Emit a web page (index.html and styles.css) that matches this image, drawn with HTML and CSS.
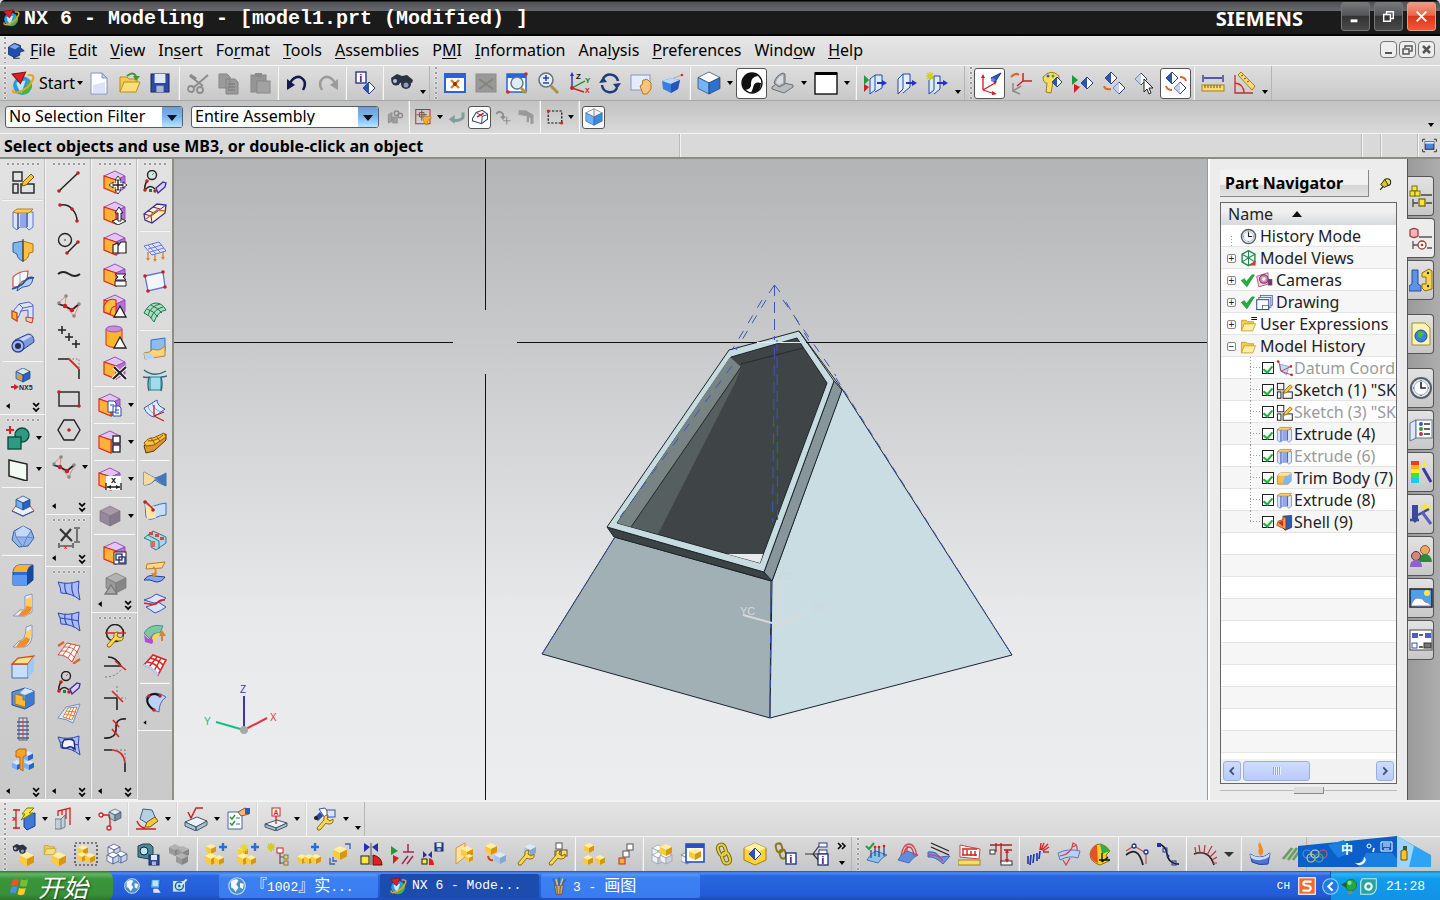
FILE: index.html
```html
<!DOCTYPE html>
<html lang="en">
<head>
    <meta charset="UTF-8">
    <meta name="viewport" content="width=device-width, initial-scale=1.0">
    <title>NX 6 - Modeling</title>
    <link rel="stylesheet" href="styles.css">
</head>
<body>
    <header class="titlebar">
        <span class="ico" data-icon="nx"></span>
        <h1>NX 6 - Modeling - [model1.prt (Modified) ]</h1>
        <span class="brand">SIEMENS</span>
        <div class="window-buttons">
            <button type="button" aria-label="Minimize"><svg viewBox="0 0 28 28"><path d="M9 17h7v3H9z" fill="#fff"/></svg></button>
            <button type="button" aria-label="Restore"><svg viewBox="0 0 28 28"><path d="M9 12h7v7H9zM12 12V9h7v7h-3" fill="none" stroke="#fff" stroke-width="1.5"/></svg></button>
            <button type="button" class="close" aria-label="Close"><svg viewBox="0 0 28 28"><path d="M9 9l10 10M19 9L9 19" stroke="#fff" stroke-width="2"/></svg></button>
        </div>
    </header>

    <nav class="menubar">
        <span class="grip"></span>
        <span class="ico" data-icon="part"></span>
        <button type="button"><u>F</u>ile</button>
        <button type="button"><u>E</u>dit</button>
        <button type="button"><u>V</u>iew</button>
        <button type="button">In<u>s</u>ert</button>
        <button type="button">Fo<u>r</u>mat</button>
        <button type="button"><u>T</u>ools</button>
        <button type="button"><u>A</u>ssemblies</button>
        <button type="button">P<u>M</u>I</button>
        <button type="button"><u>I</u>nformation</button>
        <button type="button">Ana<u>l</u>ysis</button>
        <button type="button"><u>P</u>references</button>
        <button type="button">Wind<u>o</u>w</button>
        <button type="button"><u>H</u>elp</button>
        <div class="doc-buttons">
            <button type="button" aria-label="Minimize document"><svg viewBox="0 0 15 15"><path d="M4 11h7" stroke="#555" stroke-width="2"/></svg></button>
            <button type="button" aria-label="Restore document"><svg viewBox="0 0 15 15"><path d="M3 7h6v5H3zM5 6V4h7v5h-2" fill="none" stroke="#555" stroke-width="1.5"/></svg></button>
            <button type="button" aria-label="Close document"><svg viewBox="0 0 15 15"><path d="M4 4l7 7M11 4l-7 7" stroke="#555" stroke-width="2.5"/></svg></button>
        </div>
    </nav>

    <div class="dockrow main-row">
        <div class="toolbar">
            <span class="grip"></span>
            <button type="button" class="start-app"><span class="ico" data-icon="nx"></span>Start<i class="caret"></i></button>
            <div class="tools" data-tools="new open save | cut copy paste | undo redo | info | find >."></div>
        </div>
        <div class="toolbar">
            <span class="grip"></span>
            <div class="tools" data-tools="fit fit-off zoom-window zoom orient rotate pan perspective | shaded > *render edges > background > | section clip clip-new >."></div>
        </div>
        <div class="toolbar">
            <span class="grip"></span>
            <div class="tools" data-tools="*wcs wcs-display palette show-hide hide show *invert | measure angle >."></div>
        </div>
    </div>

    <div class="dockrow selection-row">
        <div class="combo"><select class="filter" aria-label="Type filter"><option>No Selection Filter</option></select></div>
        <div class="combo"><select class="scope" aria-label="Selection scope"><option>Entire Assembly</option></select></div>
        <div class="tools small" data-tools="related | snap > back *body turn detail | marquee > | *solid"></div>
        <i class="caret corner"></i>
    </div>

    <div class="status-row">
        <p>Select objects and use MB3, or double-click an object</p>
        <span class="cell wide"></span>
        <span class="cell"></span>
        <span class="cell mid"></span>
        <span class="cell last ico" data-icon="fullscreen"></span>
    </div>

    <main class="workspace">
        <aside class="left-dock">
            <div class="column" data-tools="# sketch - extrude revolve sweep guide tube - nx5 endm # unite+ datum+ - boss sphere - blend bend bend-soft chamfer shell thread pattern end!"></div>
            <div class="column" data-tools="# line arc circle-line spline points-curve points chamfer-curve rectangle hexagon - points-curve+ endl # dimension end # surf-ruled surf-mesh surf-move curves surf-orange surf-hole end!"></div>
            <div class="column" data-tools="# sync-move sync-pull sync-offset sync-replace sync-resize sync-cylinder sync-delete - sync-copy+ - sync-pattern+ - sync-dim+ - sync-off+ - sync-group sync-shape end # curve-edit curve-trim curve-corner curve-s curve-fillet end!"></div>
            <div class="column narrow" data-tools="# curves wire-box - mesh-drop quad mesh-green - face-join face-bridge face-axis face-wave - face-twist face-curve face-points face-project face-fold face-color face-red - face-edge endx"></div>
        </aside>

        <section class="viewport" aria-label="Graphics window">
            <svg viewBox="174 159 1034 641" preserveAspectRatio="xMidYMid slice">
                <!-- body -->
                <g stroke="#1c2430" stroke-width="1" stroke-linejoin="round">
                    <path d="M542 654L770 718L771 581L615 537Z" fill="#a0b0b5"/>
                    <path d="M770 718L1012 655L842 389L772 581Z" fill="#c9dde2"/>
                    <path d="M607 527L764 572L772 581L614 537Z" fill="#3c4343"/>
                    <path d="M834 381L842 390L772 581L764 572Z" fill="#87969a"/>
                    <path d="M729 350L799 331L834 381L764 572L607 527Z" fill="#c7dcdf"/>
                    <path d="M731 357L797 338L827 383L760 563L617 523Z" fill="#3f4546"/>
                </g>
                <path d="M727 554H763L760 563Z" fill="#e9ebeb"/>
                <path d="M741 367L735 383L658 534L631 527Z" fill="#565f5f"/>
                <path d="M730 357L741 367L631 527L617 523Z" fill="#788483"/>
                <path d="M741 367L631 527M741 364L803 348M799 331L842 389" fill="none" stroke="#252b2d"/>
                <!-- hidden edges -->
                <g fill="none" stroke="#3957bd" stroke-width="1">
                    <path d="M774.500 285V340M774.500 348L772.500 522M777 340L777.500 520" stroke-dasharray="11 6"/>
                    <path d="M766 300L736 350M762 300L732 350M732 366L620 517M783 300L836 376M786 302L812 346" stroke-dasharray="9 9"/>
                    <path d="M836 378L1012 655M770 718L771 581M542 654L615 537" stroke-dasharray="8 7"/>
                    <path d="M769 293L774.500 285L780 292"/>
                </g>
                <!-- crosshair -->
                <path d="M174 342.500H453M517 342.500H757M806 342.500H1208M485.500 159V310M485.500 374V800" stroke="#111" fill="none"/>
                <path d="M757 342.500H801" stroke="#e8eeee"/>
                <!-- work coordinate system -->
                <path d="M779 583V625L743 615M779 625L808 611" stroke="#d9d9dc" stroke-width="2" fill="none"/>
                <g class="wcs-label"><text x="778" y="580">ZC</text><text x="740" y="615">YC</text><text x="813" y="611">XC</text></g>
                <!-- view triad -->
                <g stroke-width="2" fill="none">
                    <path d="M244 730V696" stroke="#3b35b5"/>
                    <path d="M244 730L216 722" stroke="#16bd84"/>
                    <path d="M244 730L267 718" stroke="#e0343f"/>
                </g>
                <circle cx="244" cy="730" r="4" fill="#a8a8a8"/>
                <g class="triad-label"><text x="240" y="693" fill="#3b35b5">Z</text><text x="204" y="725" fill="#16bd84">Y</text><text x="270" y="721" fill="#e0343f">X</text></g>
            </svg>
        </section>

        <aside class="navigator">
            <div class="nav-head">
                <h2>Part Navigator</h2>
                <span class="ico pin" data-icon="pin"></span>
            </div>
            <div class="tree-box">
                <button type="button" class="tree-title">Name<i class="sort"></i></button>
                <ul class="tree">
                    <li><span class="node"></span><span class="ico" data-icon="clock"></span>History Mode</li>
                    <li><span class="node box">+</span><span class="ico" data-icon="views"></span>Model Views</li>
                    <li><span class="node box">+</span><span class="ico" data-icon="check"></span><span class="ico" data-icon="camera"></span>Cameras</li>
                    <li><span class="node box">+</span><span class="ico" data-icon="check"></span><span class="ico" data-icon="drawing"></span>Drawing</li>
                    <li><span class="node box">+</span><span class="ico" data-icon="folder-eq"></span>User Expressions</li>
                    <li><span class="node box">−</span><span class="ico" data-icon="folder"></span>Model History</li>
                    <li class="child off"><label><input type="checkbox" checked><span class="ico" data-icon="csys"></span>Datum Coord</label></li>
                    <li class="child"><label><input type="checkbox" checked><span class="ico" data-icon="sketch"></span>Sketch (1) "SK</label></li>
                    <li class="child off"><label><input type="checkbox" checked><span class="ico" data-icon="sketch"></span>Sketch (3) "SK</label></li>
                    <li class="child"><label><input type="checkbox" checked><span class="ico" data-icon="extrude"></span>Extrude (4)</label></li>
                    <li class="child off"><label><input type="checkbox" checked><span class="ico" data-icon="extrude"></span>Extrude (6)</label></li>
                    <li class="child"><label><input type="checkbox" checked><span class="ico" data-icon="trim-body"></span>Trim Body (7)</label></li>
                    <li class="child"><label><input type="checkbox" checked><span class="ico" data-icon="extrude"></span>Extrude (8)</label></li>
                    <li class="child end"><label><input type="checkbox" checked><span class="ico" data-icon="shell-red"></span>Shell (9)</label></li>
                </ul>
                <div class="scroll">
                    <button type="button" aria-label="Scroll left"><svg viewBox="0 0 18 18"><path d="M11 5L7 9l4 4" fill="none" stroke="#3c5080" stroke-width="2"/></svg></button>
                    <span class="thumb"><i></i></span>
                    <button type="button" class="right" aria-label="Scroll right"><svg viewBox="0 0 18 18"><path d="M7 5l4 4-4 4" fill="none" stroke="#3c5080" stroke-width="2"/></svg></button>
                </div>
            </div>
            <div class="splitter"><i></i></div>
        </aside>

        <nav class="resource-bar">
            <button type="button" aria-label="Assembly Navigator" data-icon="tab-assembly"></button>
            <button type="button" class="active" aria-label="Part Navigator" data-icon="tab-part"></button>
            <button type="button" aria-label="Reuse Library" data-icon="tab-reuse"></button>
            <button type="button" class="apart" aria-label="Web Browser" data-icon="tab-web"></button>
            <button type="button" class="apart" aria-label="History" data-icon="clock"></button>
            <button type="button" aria-label="Process Studio" data-icon="tab-list"></button>
            <button type="button" aria-label="Materials" data-icon="tab-colors"></button>
            <button type="button" aria-label="Manufacturing" data-icon="tab-wizard"></button>
            <button type="button" aria-label="Roles" data-icon="tab-roles"></button>
            <button type="button" aria-label="Scenes" data-icon="tab-scene"></button>
            <button type="button" aria-label="Windows" data-icon="tab-windows"></button>
        </nav>
    </main>

    <div class="dockrow lower-row">
        <div class="toolbar">
            <span class="grip"></span>
            <div class="tools" data-tools="dim-quick > dim-ord > csys-link | edit-face > | finish > checklist | label-a > | pmi-tools > >."></div>
        </div>
    </div>

    <div class="dockrow assembly-row">
        <div class="toolbar">
            <span class="grip"></span>
            <div class="tools" data-tools="as-find as-open as-box as-wire as-camera as-off | as-add as-new as-parent as-array as-move mirror constrain mirror-save as-wave as-replace as-wrench as-wrench2 | as-explode as-steps | as-ghost as-window link link-cube link-info tree-info more"></div>
        </div>
        <div class="toolbar">
            <span class="grip"></span>
            <div class="tools" data-tools="an-check an-arc an-lines an-gap an-dist | an-comb an-comb2 an-color | an-curve an-nodes | an-hair >> | an-flow an-zebra"></div>
        </div>
        <div class="ime">
            <svg viewBox="0 0 136 32">
                <path d="M0 11L99 1V32H0Z" fill="#0b5fc8"/>
                <path d="M30 10l16-5 8 12-14 6zM60 32l8-14h26l5 6v8z" fill="#1b7fe0"/>
                <path d="M99 1L133 20V32H99Z" fill="#2fa3f5"/>
                <path d="M99 1l17 10-5 21H99z" fill="#9cd4fb"/>
                <g fill="none" stroke-width="1.200"><circle cx="9" cy="19" r="4" stroke="#3b8df0"/><circle cx="17" cy="19" r="4" stroke="#c9d6e6"/><circle cx="25" cy="19" r="4" stroke="#e05050"/><circle cx="13" cy="23" r="4" stroke="#e8c840"/><circle cx="21" cy="23" r="4" stroke="#45b860"/></g>
                <path d="M66 22q0 7-9 6 6 5 10-1 2-3-1-5" fill="#fff"/>
                <circle cx="71" cy="11" r="2" fill="none" stroke="#fff"/><path d="M76 13l-1 4" stroke="#fff" stroke-width="1.500"/>
                <path d="M83 7h11v9H83zM85 9h7M85 11h7M86 14h5" fill="none" stroke="#fff"/>
                <path d="M103 16q3-3 6 0v9h-6z" fill="#f7c42a" stroke="#6b5410"/><path d="M105 11h4v4h-4z" fill="#4a5630"/>
            </svg>
            <span>中</span>
        </div>
    </div>

    <footer class="taskbar">
        <button type="button" class="start"><span class="ico" data-icon="windows"></span>开始</button>
        <div class="quick">
            <button type="button" aria-label="Browser" data-icon="globe"></button>
            <button type="button" aria-label="Desktop" data-icon="desktop"></button>
            <button type="button" aria-label="Mail" data-icon="mail"></button>
        </div>
        <button type="button" class="task"><span class="ico" data-icon="globe"></span><span><b>『</b>1002<b>』实</b>...</span></button>
        <button type="button" class="task active"><span class="ico" data-icon="nx"></span><span>NX 6 - Mode...</span></button>
        <button type="button" class="task"><span class="ico" data-icon="brushes"></span><span>3 - <b>画图</b></span></button>
        <div class="lang"><span>CH</span><span class="ico" data-icon="sogou"></span></div>
        <div class="tray">
            <span class="ico" data-icon="tray-back"></span>
            <span class="ico" data-icon="tray-green"></span>
            <span class="ico" data-icon="tray-teal"></span>
            <time>21:28</time>
        </div>
    </footer>

    <script src="toolbars.js"></script>
</body>
</html>
```

FILE: styles.css
```css
* {
    box-sizing: border-box;
}

body {
    margin: 0;
    min-height: 100vh;
    display: flex;
    flex-direction: column;
    overflow: hidden;
    font-family: "Noto Sans", "Noto Sans CJK SC", sans-serif;
    font-size: 16px;
    color: #000;
    background: #d8d8d8;
}

button {
    font: inherit;
    color: inherit;
    background: none;
    border: 0;
    padding: 0;
    margin: 0;
}

svg {
    display: block;
}

ul, p, h1, h2 {
    margin: 0;
    padding: 0;
}

.ico {
    display: inline-block;
    flex: none;
    width: 18px;
    height: 18px;
}

.ico svg {
    width: 100%;
    height: 100%;
}

/* title */
.titlebar {
    display: flex;
    align-items: center;
    height: 36px;
    padding: 0 4px 0 2px;
    color: #fff;
    background: linear-gradient(#000 1px, #505154 2px, #68696c 11px, #1b1b1b 11px, #1b1b1b 34px, #000 34px);
    border-radius: 5px 5px 0 0;
}

.titlebar h1 {
    flex: 1;
    margin-left: 4px;
    font: bold 20px "Liberation Mono", monospace;
    white-space: pre;
}

.brand {
    margin-right: 38px;
    font: bold 20px "Noto Sans", sans-serif;
}

.window-buttons {
    display: flex;
    gap: 4px;
    align-self: flex-start;
    padding-top: 2px;
}

.window-buttons button {
    width: 29px;
    height: 29px;
    border: 1px solid #777;
    border-radius: 3px;
    background: linear-gradient(#77787a, #55565a 45%, #333 50%, #4a4a4a);
}

.window-buttons .close {
    border-color: #d8a090;
    background: linear-gradient(#f09a80, #e8684c 45%, #e03418 50%, #ee5a38);
}

/* menu */
.menubar {
    display: flex;
    align-items: center;
    gap: 13px;
    height: 30px;
    padding: 0 5px 2px 0;
    background: linear-gradient(#e6e6e6, #dadada);
    border-bottom: 1px solid #f6f6f6;
}

.menubar .ico {
    margin: 0 -8px 0 -14px;
}

.menubar u {
    text-underline-offset: 2px;
}

.doc-buttons {
    display: flex;
    gap: 2px;
    margin-left: auto;
}

.doc-buttons button {
    width: 17px;
    height: 17px;
    border: 1px solid #777;
    border-radius: 4px;
    background: #eee;
}

/* toolbars */
.dockrow {
    display: flex;
    position: relative;
    background: linear-gradient(#dedede, #c8c8c8);
}

.toolbar {
    display: flex;
    align-items: stretch;
    margin-right: 1px;
    border-right: 1px solid #b5b5b5;
}

.grip {
    flex: none;
    width: 8px;
    background: radial-gradient(circle at 2px 2px, #999 1px, #f4f4f4 1px, transparent 2px) 3px 5px / 4px 5px repeat-y;
}

.menubar .grip {
    align-self: stretch;
}

.tools {
    display: flex;
    align-items: center;
}

.tool {
    flex: none;
    display: flex;
    align-items: center;
    justify-content: center;
    width: 31px;
    height: 31px;
}

.tool svg {
    width: 24px;
    height: 24px;
}

.tool.pressed {
    border: 1px solid #555;
    border-radius: 3px;
    background: #fff;
}

.sep {
    flex: none;
    align-self: stretch;
    width: 6px;
    background: linear-gradient(90deg, transparent 2px, #b8b8b8 2px, #f6f6f6 3px, #f6f6f6 4px, transparent 4px);
}

.caret {
    display: inline-block;
    border: 3px solid transparent;
    border-top: 4px solid #000;
    border-bottom: 0;
}

.drop {
    flex: none;
    display: flex;
    align-items: center;
    justify-content: center;
    width: 12px;
    height: 31px;
}

.drop.low {
    align-items: flex-end;
    padding-bottom: 5px;
}

.drop.big {
    width: 18px;
}

.drop.big .caret {
    border-width: 5px 5px 0;
    border-top-color: #333;
}

.more, .more svg {
    width: 19px;
    height: 31px;
}

.main-row {
    height: 35px;
    border-bottom: 1px solid #a8a8a8;
}

.start-app {
    display: flex;
    align-items: center;
    width: 75px;
    padding-left: 2px;
}

.start-app .ico {
    width: 25px;
    height: 25px;
    margin-right: 4px;
}

.start-app .caret {
    margin-left: 2px;
}

.selection-row {
    align-items: center;
    gap: 8px;
    height: 32px;
    padding-left: 5px;
    background: linear-gradient(#c2c2c2, #d9d9d9);
}

.combo {
    position: relative;
}

.combo select {
    display: block;
    height: 22px;
    padding: 0 24px 2px 3px;
    font: 16px "Noto Sans", sans-serif;
    line-height: 18px;
    color: #000;
    appearance: none;
    background: #fff;
    border: 1px solid #555e6a;
    border-radius: 3px;
}

.combo .filter {
    width: 178px;
}

.combo .scope {
    width: 188px;
}

.combo::before {
    content: "";
    position: absolute;
    top: 1px;
    right: 1px;
    width: 20px;
    height: 20px;
    border-radius: 0 2px 2px 0;
    background: linear-gradient(#6f9bd6, #7ab6ef 50%, #b9e4ff);
    pointer-events: none;
}

.combo::after {
    content: "";
    position: absolute;
    top: 9px;
    right: 6px;
    border: 5px solid transparent;
    border-top: 6px solid #111;
    border-bottom: 0;
    pointer-events: none;
}

.small {
    margin-left: -4px;
    align-self: stretch;
}

.small .tool {
    width: 23px;
    height: 23px;
}

.small .tool svg {
    width: 18px;
    height: 18px;
}

.small .drop {
    width: 10px;
}

.corner {
    margin: 16px 6px 0 auto;
}

/* prompt line */
.status-row {
    display: flex;
    align-items: center;
    height: 26px;
    background: #d9d9d9;
    border-top: 1px solid #f4f4f4;
    border-bottom: 2px solid #8c8c86;
}

.status-row p {
    width: 680px;
    padding-left: 4px;
    font-weight: bold;
    white-space: nowrap;
}

.cell {
    align-self: stretch;
    width: 19px;
    border-left: 1px solid #f4f4f4;
    box-shadow: -1px 0 #bbb;
}

.cell.wide {
    flex: 1;
}

.cell.mid {
    width: 37px;
}

.cell.last {
    width: 22px;
    height: auto;
    padding: 4px 3px;
}

/* workspace */
.workspace {
    flex: 1;
    display: flex;
    min-height: 0;
}

.left-dock {
    display: flex;
    border-right: 2px solid #8e8e84;
    background: linear-gradient(#e2e2e2, #c9c9c9);
}

.column {
    display: flex;
    flex-direction: column;
    align-items: center;
    width: 46px;
    border-right: 1px solid #f6f6f6;
    box-shadow: inset -1px 0 #bdbdbd;
}

.column.narrow {
    width: 34px;
    border: 0;
    box-shadow: none;
}

.column .grip {
    width: 36px;
    height: 7px;
    background: radial-gradient(circle at 2px 2px, #999 1px, #f4f4f4 1px, transparent 2px) 1px 3px / 5px 4px repeat-x;
}

.narrow .grip {
    width: 26px;
}

.column .sep {
    width: auto;
    height: 6px;
    margin: 0 2px;
    background: linear-gradient(transparent 2px, #b8b8b8 2px, #f6f6f6 3px, #f6f6f6 4px, transparent 4px);
}

.pair {
    display: flex;
    align-self: stretch;
    padding-left: 2px;
}

.colend {
    flex: none;
    display: flex;
    align-self: stretch;
    align-items: flex-end;
    height: 14px;
    padding: 0 4px;
    border-bottom: 1px solid #f6f6f6;
}

.colend.m {
    height: 20px;
}

.colend.l {
    height: 33px;
}

.colend.last {
    margin-top: auto;
}

.colend svg {
    width: 36px;
    height: 12px;
}

.viewport {
    flex: 1;
    min-width: 0;
    background: linear-gradient(#b3b4b5, #d5d6d7 45%, #e8e9ea 72%, #ecedee);
}

.viewport svg {
    width: 100%;
    height: 100%;
}

.wcs-label {
    font: 11px "Liberation Sans", sans-serif;
    fill: #d4d6d9;
}

.triad-label {
    font: 10px "Liberation Sans", sans-serif;
}

/* part navigator */
.navigator {
    display: flex;
    flex-direction: column;
    width: 199px;
    padding: 11px 10px 0 10px;
    background: #ececec;
    border-left: 2px solid #fff;
    box-shadow: -1px 0 #999;
}

.nav-head {
    display: flex;
    align-items: center;
    gap: 10px;
    margin-bottom: 5px;
}

.nav-head h2 {
    width: 149px;
    height: 27px;
    padding-left: 5px;
    font-size: 16px;
    line-height: 26px;
    white-space: nowrap;
    background: linear-gradient(#f2f2f2 55%, #d4d4d4 60%, #e4e4e4);
    border: solid #888;
    border-width: 0 1px 1px 0;
}

.pin {
    width: 14px;
    height: 14px;
}

.tree-box {
    flex: 1;
    display: flex;
    flex-direction: column;
    border: 1px solid #666;
    background: #fff;
    color: #222;
}

.tree-title {
    display: flex;
    align-items: center;
    gap: 19px;
    height: 22px;
    padding-left: 7px;
    background: linear-gradient(#f0f0f0 40%, #d6d8da);
}

.sort {
    border: 5px solid transparent;
    border-bottom: 6px solid #111;
    border-top: 0;
}

.tree {
    flex: 1;
    list-style: none;
    background: repeating-linear-gradient(#fff 0 21px, #e4e4e4 21px 22px, #f6f6f6 22px 43px, #e4e4e4 43px 44px);
}

.tree li {
    display: flex;
    align-items: center;
    height: 22px;
    padding-left: 6px;
    white-space: nowrap;
}

.tree .ico {
    width: 17px;
    height: 17px;
    margin-right: 3px;
}

.tree .ico:has(+ .ico) {
    width: 15px;
    margin-right: 1px;
}

.tree label .ico {
    margin-right: 1px;
}

.node {
    flex: none;
    width: 9px;
    height: 22px;
    margin-right: 4px;
    background: repeating-linear-gradient(#999 0 1px, transparent 1px 3px) 4px 11px / 1px 11px no-repeat;
}

.node.box {
    height: 9px;
    background: #fff;
    border: 1px solid #888;
    border-radius: 2px;
    font: 10px "Liberation Sans", sans-serif;
    line-height: 7px;
    text-align: center;
}

.tree .child {
    padding-left: 29px;
    background: repeating-linear-gradient(#999 0 1px, transparent 1px 3px) 29px 0 / 1px 100% no-repeat, repeating-linear-gradient(90deg, #999 0 1px, transparent 1px 3px) 29px 10px / 10px 1px no-repeat;
}

.tree .child.end {
    background-size: 1px 11px, 10px 1px;
}

.tree label {
    display: flex;
    align-items: center;
    padding-left: 12px;
}

.tree .off {
    color: #9a9a9a;
}

.tree input {
    appearance: none;
    width: 12px;
    height: 12px;
    margin: 0 2px 0 0;
    border: 1px solid #222;
    background: #fff;
    display: grid;
    place-items: center;
}

.tree input:checked::before {
    content: "";
    width: 4px;
    height: 7px;
    border: solid #1fae3c;
    border-width: 0 2px 2px 0;
    transform: rotate(40deg);
}

.scroll {
    display: flex;
    gap: 2px;
    height: 24px;
    padding: 2px;
    background: #f2f2f2;
}

.scroll button, .thumb {
    width: 18px;
    height: 20px;
    border: 1px solid #98b0e0;
    border-radius: 3px;
    background: linear-gradient(#d0dcfb, #b8cbf8);
}

.scroll .thumb {
    display: grid;
    place-items: center;
    width: 67px;
}

.thumb i {
    width: 8px;
    height: 8px;
    background: repeating-linear-gradient(90deg, #8fa8e0 0 1px, #e8efff 1px 2px);
}

.scroll .right {
    margin-left: auto;
}

.splitter {
    display: grid;
    place-items: center;
    height: 16px;
    background: linear-gradient(#bbb, #bbb) 0 6px / 100% 1px no-repeat;
}

.splitter i {
    width: 30px;
    height: 7px;
    margin-bottom: 3px;
    background: #ddd;
    border: solid #888;
    border-width: 0 1px 1px 0;
}

.resource-bar {
    display: flex;
    flex-direction: column;
    gap: 2px;
    width: 33px;
    padding-top: 17px;
    background: linear-gradient(90deg, #9a9a9a, #adadad);
    border-left: 1px solid #555;
}

.resource-bar button {
    flex: none;
    width: 26px;
    height: 40px;
    border: 1px solid #555;
    border-left: 0;
    border-radius: 0 4px 4px 0;
    background: linear-gradient(#e2e2e2, #c8c8c8);
}

.resource-bar .active {
    width: 28px;
    background: #ececec;
    margin-left: -1px;
}

.resource-bar .apart {
    margin-top: 12px;
}

.resource-bar svg {
    width: 24px;
    height: 24px;
    margin: auto;
}

/* lower toolbars */
.lower-row {
    height: 36px;
    background: linear-gradient(#e4e4e4, #d8d8d8);
    border-top: 2px solid #f2f2f2;
}

.assembly-row {
    height: 35px;
    background: linear-gradient(#dadada, #c6c6c6);
    border-top: 1px solid #f6f6f6;
}

.ime {
    position: absolute;
    right: 6px;
    bottom: 4px;
    width: 136px;
    height: 32px;
}

.ime svg {
    width: 136px;
    height: 32px;
}

.ime span {
    position: absolute;
    left: 43px;
    top: 5px;
    color: #fff;
    font: bold 12px "Noto Sans CJK SC", sans-serif;
}

/* taskbar */
.taskbar {
    display: flex;
    align-items: center;
    height: 30px;
    color: #fff;
    font: 13px "Liberation Mono", "Noto Sans CJK SC", monospace;
    background: linear-gradient(#1d4fc0, #4a8df8 2px, #2a66e0 5px, #235bd8 24px, #1c48b0);
}

.taskbar b {
    font: 16px "Noto Sans CJK SC", sans-serif;
    line-height: 1;
}

.start {
    display: flex;
    align-items: center;
    gap: 8px;
    width: 113px;
    height: 30px;
    padding-left: 10px;
    font: italic 25px "Noto Sans CJK SC", sans-serif;
    line-height: 30px;
    text-shadow: 1px 1px 2px #1c4a1c;
    border-radius: 0 8px 8px 0;
    background: linear-gradient(#2d7a2d, #64b564 3px, #3a963a 8px, #388f38 24px, #2a6e2a);
}

.start .ico {
    width: 20px;
    height: 20px;
}

.quick {
    display: flex;
    gap: 8px;
    width: 106px;
    padding-left: 11px;
}

.quick svg {
    width: 16px;
    height: 16px;
}

.task {
    display: flex;
    align-items: center;
    gap: 5px;
    width: 159px;
    height: 24px;
    margin-right: 2px;
    padding-left: 9px;
    line-height: 16px;
    white-space: pre;
    border-radius: 2px;
    background: linear-gradient(#5a9af8, #3b80f2 4px, #3a7cf0);
}

.task.active {
    background: #1c4cae;
}

.lang {
    display: flex;
    align-items: center;
    gap: 8px;
    margin-left: auto;
    margin-right: 14px;
    font-size: 11px;
}

.tray {
    display: flex;
    align-items: center;
    gap: 2px;
    height: 30px;
    padding-right: 15px;
    background: linear-gradient(#1280d0, #2cb4f8 3px, #129bec 8px, #1292e4);
    border-left: 1px solid #0d5fae;
}

.tray .ico {
    width: 17px;
    height: 17px;
}

.tray .ico:first-child {
    margin-left: -9px;
}

.tray time {
    margin-left: 7px;
}
```

FILE: toolbars.js
```js
// small drawing helpers, every icon sits on a 24x24 grid
const p = (d, f = 'none', s = 'none', w = 1) => `<path d="${d}" fill="${f}" stroke="${s}" stroke-width="${w}"/>`;
const l = (d, s = '#222', w = 1.5) => p(d, 'none', s, w);
const c = (x, y, r, f = 'none', s = 'none', w = 1) => `<circle cx="${x}" cy="${y}" r="${r}" fill="${f}" stroke="${s}" stroke-width="${w}"/>`;
const r = (x, y, w, h, f = 'none', s = 'none', sw = 1) => `<rect x="${x}" y="${y}" width="${w}" height="${h}" fill="${f}" stroke="${s}" stroke-width="${sw}"/>`;
const t = (x, y, text, size, f = '#111') => `<text x="${x}" y="${y}" font-size="${size}" font-weight="bold" font-family="Liberation Sans, sans-serif" fill="${f}">${text}</text>`;
const dots = (list, f = '#c81e1e', rad = 1.8) => list.map(([x, y]) => c(x, y, rad, f)).join('');

const BLUE = ['#d6e8ff', '#74aef4', '#2a62cc'];
const GOLD = ['#fff0a0', '#fccb3c', '#d9960f'];
const SYNC = ['#e4c4f4', '#ffb437', '#b273d9'];
const GRAY = ['#b2b2b2', '#9a9a9a', '#868686'];
const STEEL = ['#e0edf5', '#a9c2d4', '#7390a8'];
const WHITE = ['#fff', '#eef3fb', '#c5d2e8'];

function cube(x, y, s, k, line = 'none') {
    const h = s / 2;
    return p(`M${x} ${y - s}l${s} ${h}l${-s} ${h}l${-s} ${-h}z`, k[0], line, .7)
        + p(`M${x - s} ${y - h}l${s} ${h}v${s}l${-s} ${-h}z`, k[1], line, .7)
        + p(`M${x + s} ${y - h}l${-s} ${h}v${s}l${s} ${-h}z`, k[2], line, .7);
}

// flatter block used by the synchronous modeling icons
const block = p('M1 6l11-5 10 5-9 4z', '#e4c4f4', '#9b4fb8') + p('M13 10l9-4v12l-9 5z', '#b273d9', '#9b4fb8')
    + p('M1 6l12 4v13L1 18z', '#ffb437', '#e02a1a', 1.2);
const sync = extra => block + extra;

const diamond = (x, y, s, f = '#2d55b0') =>
    p(`M${x} ${y - s}l${s} ${s}l${-s} ${s}l${-s} ${-s}z`, '#fff', '#27408a') + p(`M${x} ${y - s}v${2 * s}l${-s} ${-s}z`, f);
const plus = (x, y) => l(`M${x - 4} ${y}h8M${x} ${y - 4}v8`, '#2470d8', 2.4);
const disk = (x, y, s) => r(x, y, s, s, '#2c4aa0', '#17265c') + r(x + s * .2, y, s * .6, s * .5, '#dfe8fa') + r(x + s * .3, y + s * .65, s * .4, s * .35, '#aab6d8');
const folder = (f = '#f8df7a') => p('M2 21V6h7l2 2h8v4', '#f0cc55', '#b8901e') + p('M2 21L6 11h16l-4 10z', f, '#b8901e');
const bino = (k = '#2b3240') => p('M1 7l6-4 5 2 5-1 6 5-1 3-9-1-3 1-8 0z', k) + c(6, 10, 4.500, k) + c(16, 13, 5, k) + c(5, 10, 2, '#b8c4d6') + c(16, 14, 2.500, '#8a9cc8');
const wrench = p('M4 21l7-8q-1-5 4-5l-1 4 3 2 3-2q1 5-4 5-2 0-3-1l-6 7q-3 1-3-2z', '#fbd84e', '#8a6b10');
const info = (x, y) => r(x, y, 10, 11, '#fff', '#1c2a80', 1.3) + t(x + 3.200, y + 9.500, 'i', 11, '#1c2a80');
const sheet = (f, s, grid) => p('M1 15L10 3l13 3-8 16Q8 14 1 15', f, s) + (grid ? l('M14 4L6 15M19 5l-8 13M4 11q8-1 14 7M7 7q8-1 14 6', s, .9) : '');
const ruled = p('M1 4q10 3 21-1-2 9 1 19Q15 15 4 15 4 10 1 4', '#a9bdf6', '#3447b0') + l('M8 5q-1 6 2 11M15 5q-1 7 2 13', '#3447b0', 1.1);
const glove = x => p('M2 18q5-8 9-9l11 4q-5 2-9 8z', x, '#3a55b8', .8);
const axis = l('M5 19V6M5 19l12-7M5 19l12 4', '#c82020', 1.3) + p('M3 7l2-4 2 4zM15 10l4 0-2 4zM14 20l5 3-5 1z', '#c82020');

const icons = {
    nx: c(12, 14, 9, '#2c9bd8') + p('M6 21q10-1 12-13 4 3 3 8-5 9-15 5z', '#46b83a') + p('M6 11q1 6 5 10l4-12z', '#bfe6fb') + l('M17 4q7-1 5 4-3 9-16 13-4 0-3-3', '#e7a51c', 2) + p('M2 3l13-2-5 11z', '#dc1f26', '#8e1014'),
    part: p('M2 8l8-5 8 3v3l5 4-6 2v4l-7 3-8-4z', '#1f4fa8', '#10265c') + p('M3 8l7-4 7 3-6 4z', '#7ba6ea') + l('M9 21v2h8', '#10265c'),
    new: p('M4 2h11l5 5v16H4z', '#fff', '#8390c4') + p('M6 14l12-3v11H6z', '#dbe2fa') + p('M15 2v5h5z', '#c0cbee', '#8390c4'),
    open: folder() + l('M9 5q6-5 9 0', '#3c9a28', 2) + p('M15 5h7l-4 5z', '#3c9a28'),
    save: disk(2, 3, 18),
    cut: l('M4 5l13 10M22 4L7 17', '#8d8d8d', 2) + c(14, 19, 3, 'none', '#8d8d8d', 1.8) + c(5, 18, 3, 'none', '#8d8d8d', 1.8) + l('M4 4l6 4', '#8d8d8d', 3),
    copy: p('M2 3h8l3 3v11H2zM9 8h9l3 3v12H9z', '#9a9a9a', '#868686') + l('M11 13h7M11 16h7M11 19h7', '#777', 1),
    paste: r(3, 4, 15, 17, '#959595', '#858585') + r(7, 2, 7, 4, '#8a8a8a') + r(9, 10, 13, 12, '#a2a2a2', '#888'),
    undo: l('M5 12q4-7 10-6 8 4 3 13', '#15184f', 2.500) + p('M2 8v11l8-5z', '#15184f'),
    redo: l('M19 12q-4-7-10-6-8 4-3 13', '#9b9b9b', 2.500) + p('M22 8v11l-8-5z', '#9b9b9b'),
    info: info(3, 1) + diamond(16, 17, 6),
    find: bino(),
    fit: r(2, 3, 20, 18, '#fff', '#2a62d8', 2) + r(2, 3, 20, 4, '#2a62d8') + l('M8 9l8 8M16 9l-8 8', '#e87820', 2.4) + c(12, 13, 2, '#7a3a10'),
    'fit-off': r(2, 3, 20, 18, '#999', '#8c8c8c') + l('M5 8l14 10M19 8L5 18', '#84847c', 2),
    'zoom-window': r(2, 3, 19, 18, '#fff', '#2a62d8', 1.500) + r(2, 3, 19, 4, '#2a62d8') + c(12, 12, 6, '#dcedf6', '#61788a', 1.500) + l('M16 17l5 5', '#b59a2c', 3) + dots([[21, 3], [3, 21]], '#d22'),
    zoom: c(10, 9, 7, '#e4eef4', '#68727c', 1.600) + l('M15 15l7 7', '#a9924a', 3) + l('M10 4v6M7 7h6M7 12h6', '#2244a8', 1.500),
    orient: l('M5 17V3', '#2236b8', 1.4) + l('M5 17l13-7', '#17842b', 1.4) + l('M5 17l12 4', '#c22', 1.500) + p('M3 5l2-4 2 4z', '#2236b8') + t(9, 8, 'Z', 8) + t(18, 12, 'Y', 8, '#17842b') + t(18, 22, 'X', 7, '#c22') + c(5, 17, 2, '#c22'),
    rotate: l('M20 10A8 8 0 0 0 5 8M4 14a8 8 0 0 0 15 3', '#223a78', 2.500) + p('M1 12l4-6 4 5zM23 12l-4 6-4-5z', '#223a78'),
    pan: r(2, 4, 19, 15, '#e6edfa', '#8095cc') + p('M11 15l2-1 1-5 2 0 1-1 2 1 3 3v6l-4 5h-4z', '#f8c476', '#b3772a'),
    perspective: p('M2 10l10-3 8 2-2 9-7 4-8-4z', '#3c7de0') + p('M2 10l10-3 8 2-9 4z', '#b9d6fb') + p('M11 13l9-4-2 9-7 4z', '#2356b8') + l('M14 7l8-3', '#c99', 1) + c(22, 4, 1.300, '#c33'),
    shaded: cube(12, 12, 11, ['#fff', '#74b4fa', '#2d70d6'], '#245'),
    render: c(12, 12, 10, '#fff', '#111', 1.4) + p('M12 2A10 10 0 0 0 5 19Q12 18 11 12Q11 6 18 5Q15 2 12 2M21 12Q14 10 13 17L11 22Q21 22 21 12', '#111'),
    edges: p('M1 16l7-5 14 3v2l-9 6-12-4z', '#b7bcbe', '#6a6f72') + p('M3 12Q5 4 12 2l2 1v10l-6 3z', '#a4a9ac', '#6a6f72') + p('M5 12q1-6 7-8v8l-4 2z', '#d8dcdd'),
    background: r(1, 2, 22, 21, '#fff', '#000', 1.300) + r(1, 1, 22, 3, '#000'),
    section: p('M7 8l5-4v15l-5 4zM12 4h7v13l-7 4', '#dcebfc', '#2349a0') + p('M1 4l5 5-5 5z', '#1f9a3c') + p('M1 13l5 3-5 5z', '#d02020') + l('M14 12h6', '#2233c0', 2) + p('M19 9l5 3-5 3z', '#2233c0'),
    clip: p('M4 8l5-5v15l-5 5zM9 3h7v13l-7 6', '#e5effc', '#2349a0') + l('M12 12h7', '#2233c0', 2) + p('M18 9l5 3-5 3z', '#2233c0'),
    'clip-new': p('M4 9l5-4v14l-5 4zM9 5h6v13l-6 5', '#dcebfc', '#2349a0') + l('M12 12h7', '#2233c0', 2) + p('M18 9l5 3-5 3z', '#2233c0') + l('M5 1v8M1 5h8M2 2l6 6M8 2L2 8', '#d5d01e', 1.500),
    wcs: axis + p('M23 2l-6 9-4-4z', '#2e5cd0', '#1c357c') + c(15, 9, 2, '#5d89ea'),
    'wcs-display': l('M4 12v8l8-5M4 20l7 3', '#8c8c8c') + l('M14 10V2M14 10h9M14 10l-6 5', '#c22') + l('M2 6q5-5 8-2', '#e0642a', 2),
    palette: p('M3 6q8-9 16-1 1 6-6 6l-2 11-5-1 1-9Q3 12 3 6', '#fbdc62', '#a07c18') + c(8, 5, 1.500, '#2a62d8') + c(13, 5, 1.500, '#38a848') + diamond(17, 11, 5),
    'show-hide': p('M1 4l6 5-6 5z', '#1f9a3c') + p('M3 13l6 3-6 6z', '#d02020') + diamond(16, 12, 6),
    hide: diamond(9, 7, 6) + diamond(17, 17, 6, '#c5d0ea') + l('M2 15q1 4 7 3', '#e0642a', 2),
    show: diamond(8, 8, 6, '#c5d0ea') + p('M11 8v13l3-3 2 5 2-1-2-5h4z', '#fff', '#222'),
    invert: diamond(8, 7, 6) + diamond(16, 17, 6, '#c5d0ea') + l('M2 15q1 4 6 4M22 10q-1-4-6-4', '#e0642a', 2),
    measure: l('M2 4v7M22 4v7M3 7h18', '#2c2c90', 1.300) + r(1, 14, 22, 6, '#f9da70', '#a4811e') + l('M4 14v3M7 14v3M10 14v3M13 14v3M16 14v3M19 14v3', '#6c5614', 1),
    angle: l('M3 4v18h18M3 12q9 1 9 10', '#c03030', 1.300) + p('M6 4l3-3 14 14-3 4z', '#f9da70', '#a4811e') + l('M9 5l2-1M12 8l2-1M15 11l2-1', '#6c5614', 1),
    related: p('M3 9l5-3v12l-5 2zM9 12h6v8H9z', '#9f9f9f', '#888') + c(14, 7, 3, 'none', '#8c8c8c', 2) + c(19, 10, 3, 'none', '#8c8c8c', 2),
    snap: r(1, 2, 19, 19, 'none', '#c22', 1.3) + l('M2 9h14M9 3v14M6 6h6v6H6z', '#844', 1.2) + p('M10 12l10-1 2 2-5 4-1 6-4-4z', '#f5b21a', '#a87410', .8),
    back: l('M20 6v7q-5 5-15 3', '#7ea09a', 4) + p('M1 15l8-6v12z', '#7ea09a'),
    body: p('M2 14l5-8 8-3 7 5v7l-8 6-12-4z', '#fff', '#3a4a6c', 1.4) + l('M7 6l8 5 7-2M15 11l-1 10', '#3a4a6c', 1.300) + l('M8 12l9-5', '#d22', 2),
    turn: l('M3 8q4-6 9 0v4', '#8e8e8e', 2.500) + p('M8 11h8l-4 5z', '#8e8e8e') + l('M17 12v10M12 17h10', '#8e8e8e', 1.5),
    detail: p('M2 3h10l3 2 7 4v12h-4v-8l-2 0v6h-3v-8l-11-2z', '#999'),
    marquee: '<rect x="3" y="4" width="18" height="16" fill="none" stroke="#111" stroke-width="1.600" stroke-dasharray="3 2"/>' + dots([[3, 4], [21, 20]], '#d22', 2),
    solid: cube(12, 12, 11, ['#eaf5ff', '#6cb4fa', '#3c88e4'], '#357') + l('M12 1v10', '#c44', 1),
    fullscreen: r(5, 6, 14, 12, '#4a86e0', '#223', 1.5) + r(5, 6, 14, 3, '#dce8fa') + l('M1 6V2h4M19 2h4v4M23 18v4h-4M5 22H1v-4', '#333', 1.6),

    sketch: r(2, 2, 9, 9, 'none', '#222', 1.4) + r(2, 14, 5, 9, 'none', '#222', 1.4) + r(10, 14, 13, 9, 'none', '#222', 1.4) + p('M11 16l1-4 8-8 3 3-8 8z', '#f8c83a', '#7a5610'),
    extrude: p('M2 5h20v15l-4 3-3-3H9l-3 3-4-3z', '#dbe4fa', '#6474c8') + p('M2 5l4-3h16l-4 4H5z', '#fbc860', '#b0842a') + r(9, 6, 6, 14, '#91a7e8') + l('M7 6v16M16 6v14', '#3b51b8', 1.5),
    revolve: p('M2 5l10-2v20Q6 21 6 16l-4-2z', '#7db7ee', '#2b5fae') + p('M12 3l10 3v8l-4 1q0 6-6 8z', '#fbbf45', '#b07712') + l('M12 1v23', '#333', 1),
    sweep: p('M6 22Q8 12 13 11l9-2q-1 7-5 8-6 0-11 5z', '#b7cef2', '#2d55b0') + p('M2 18V8q6-6 15-6l-1 9q-6 0-9 7z', '#f6f8fe', '#d44', 1.1) + l('M9 4v10', '#7ac08a', 1) + l('M1 20q10-3 13-8 4-5 9-3', '#28509c', 1.7),
    guide: p('M3 10l5-6 10-2 4 3v14l-5-1V10l-7 1-3 7-5-2z', '#dbe4fb', '#5563c4') + l('M8 4l4 4 10-2M12 8l-3 4', '#5563c4', 1) + p('M1 11l5 2v8l-5-3z', '#fbc030', '#d03820', 1.3) + p('M15 17l7 1-1 5-6-2z', '#fbc9b0', '#d03820'),
    tube: p('M4 9L17 3q6 0 6 8L10 20z', '#7d9ae0', '#2c448c') + p('M6 9l11-5 4 1-10 6z', '#c6d5fa') + c(7, 15, 6, '#9fb6ee', '#2c448c', 1.3) + c(7, 15, 3, '#1f2d58'),
    nx5: cube(12, 7, 7, BLUE, '#245') + c(9, 9, 2.4, '#f59220') + l('M0 19h5', '#c22', 2) + p('M3 16l5 3-5 3z', '#c22') + t(8, 22, 'NX5', 7, '#1d2360'),
    unite: c(16, 9, 7, '#2f9a82', '#124c40', 1.4) + r(2, 11, 13, 12, '#2f9a82', '#124c40', 1.4) + l('M0 4h8M4 0v8', '#d22', 2),
    datum: p('M3 3l18 4v17L3 19z', '#f2fbf2', '#222', 1.5),
    boss: p('M1 17l7-9h8l7 9-11 5z', '#e9f0f8', '#c05030') + cube(12, 9, 7, BLUE, '#246') + l('M1 17l11 5 11-5', '#3c64a8', 1.2),
    sphere: p('M12 1l8 4 3 8-6 8-9 1-7-7 2-9z', '#93b4ea', '#3c5ca8') + p('M4 7l8-6 8 5-4 6H5z', '#c4d8f8') + l('M4 7l1 5h11l4-6M16 12l-4 10M5 12l7 10M16 12l7 1', '#6484c4', 1),
    blend: p('M2 10q1-6 6-7h14v15l-6 5H2z', '#2d6ad8', '#1d3c88') + p('M2 10q2-7 6-7h14q-5 1-6 7z', '#fbb02c') + p('M2 13h14v10H2z', '#5c98f0') + p('M16 10q1-6 6-7v15l-6 5z', '#17479f'),
    bend: p('M14 3l7-2v18l-7 4H2l7-6h5z', '#e6edf8', '#8298c4') + p('M15 6l6-3v12q-2 7-9 8H7l4-5q4-1 4-6', '#fbcf64') + p('M11 18q4-1 4-5l6 1q-2 8-9 9H7z', '#f08c2a'),
    'bend-soft': p('M15 3l6-2v12q-1 8-8 10H2l6-6q7 0 7-14', '#e4eaf4', '#8298c4') + p('M15 8l5-3q1 14-8 17l-7 1 4-6q6-1 6-9', '#fbcf64') + p('M9 17q4 0 5-4l5 2q-2 6-7 8H5z', '#f08c2a'),
    chamfer: p('M1 9h16v14H1z', '#c6defa', '#3a6fbe') + p('M1 9l6-6 16-2-6 8z', '#fbe08a', '#d24a20', 1.3) + p('M17 9l6-8v15l-6 7z', '#9ccaf6'),
    shell: p('M1 6l13-4 9 3v13l-9 5-13-4z', '#5c93de', '#264f98') + p('M4 8l8 2v4h6v6l-5 1-9-3z', '#fbb737', '#a8720e') + p('M14 9l8-3v12l-8 4z', '#3f78cc') + p('M14 2l9 3-9 4-5-2z', '#d6e6fb'),
    thread: r(8, 1, 8, 22, '#cfd9e6', '#54657a') + l('M6 5h12M6 9h12M6 13h12M6 17h12M6 21h12', '#4a5d7a', 1.6) + l('M12 1v22', '#c44', 1),
    pattern: cube(6, 17, 5, BLUE) + cube(18, 17, 5, BLUE) + cube(17, 8, 5, BLUE) + p('M5 3l3-2h7v6l-3 2v14l-3-2V9H5z', '#f9a22c', '#b8660c'),
    line: l('M2 21L21 3') + dots([[2, 21], [21, 3]]),
    arc: l('M3 4q8-1 12 4 5 5 5 12') + dots([[3, 4], [15, 8], [20, 20]]),
    'circle-line': c(8, 8, 6.500, 'none', '#222', 1.4) + c(8, 8, .8, '#222') + l('M10 21l11-11') + dots([[10, 21], [21, 10]]),
    spline: l('M1 11q5-4 11 0 6 4 11 0', '#222', 2),
    'points-curve': l('M1 9l8-7-1 10 9 10 5-11', '#e08a80', 1) + l('M1 10l7 2 7 4 7-6', '#222', 1.8) + dots([[2, 9], [9, 2], [17, 22], [22, 10]], '#888', 1.8) + dots([[8, 12], [15, 16]], '#c81e1e', 2.200),
    points: l('M1 5h8M5 1v8M8 12h8M12 8v8M15 19h8M19 15v8', '#222', 1.5),
    'chamfer-curve': l('M1 3h11M22 13v10', '#222', 1.5) + l('M12 3l10 10', '#d22', 1.8) + '<path d="M12 3h10v10" fill="none" stroke="#777" stroke-dasharray="1.500 2"/>',
    rectangle: r(2, 5, 20, 14, 'none', '#222', 1.4) + dots([[2, 5], [22, 19]]),
    hexagon: p('M7 2h10l6 10-6 10H7L1 12z', 'none', '#222', 1.4) + dots([[12, 12]]),
    dimension: l('M3 3l12 12M14 3L4 15', '#333', 2.200) + l('M17 2h6M17 16h6M20 3v12M2 17v5M16 17v5M3 20h12', '#222', 1.100) + t(7, 23, 'x', 6, '#c22'),
    'surf-ruled': ruled,
    'surf-mesh': ruled + l('M3 9q10 1 19 3', '#3447b0', 1.1),
    'surf-move': sheet('#fff', '#e0452a', 1) + l('M1 6l6-4M16 24l7-5', '#e0642a', 2.200),
    curves: c(9, 5, 4.500, 'none', '#222', 1.4) + l('M9 5l2-2', '#2a8', 1) + l('M4 11q-3 5-2 9M3 19q4-5 9 0') + dots([[4, 11], [2, 20], [12, 21]]) + r(6, 19, 3, 3, '#17842b') + p('M13 18l7-6 3 1-1 4-7 6z', '#dcd0fa', '#3b2a9c', 1.3),
    'surf-orange': p('M1 16l8-11 14-3-7 19q-6-4-15-5', '#dcebf8', '#6a90c8') + p('M6 15l5-9 9-1-5 13z', '#fff', '#e87a28') + l('M14 6l-5 10M17 5l-5 12M8 12l10 2M9 9l10 1', '#e87a28', 1),
    'surf-hole': ruled + l('M3 9q10 1 19 3', '#3447b0', 1) + p('M6 15q-2-3 1-8 8-2 10 1l1 8q-4-4-8-1z', '#eef3fd', '#1c2a70', 1.4),

    'sync-move': sync(l('M15 7v16M7 15h16', '#fff', 4) + l('M15 8v14M8 15h14', '#222', 1.4) + p('M12 10l3-4 3 4zM12 20l3 4 3-4zM10 12l-4 3 4 3zM20 12l4 3-4 3z', '#fff', '#222', .9)),
    'sync-pull': sync(p('M9 20l8-3 6 3-8 4z', '#fff', '#222') + p('M15 20v-8h-3l4-6 4 6h-2v8z', '#fff', '#222')),
    'sync-offset': sync(p('M10 13l5-2v10h-5zM15 14l3-4h5v11h-8z', '#fff', '#222', 1.200)),
    'sync-replace': sync(p('M12 11h11l-3 3 3 3H12l3-3zM12 18h11v5H12z', '#fff', '#222')),
    'sync-resize': block + p('M1 12q4-9 12-6v6q-5 0-6 8l-6-2z', '#fdc03c', '#e02a1a', 1.2) + p('M17 12l6 11H11z', '#fff', '#222', 1.300),
    'sync-cylinder': p('M3 4h16v16q-8 5-16 0z', '#fdb52e', '#e02a1a') + '<ellipse cx="11" cy="4" rx="8" ry="3" fill="#c88ae4" stroke="#9b4fb8"/>' + p('M17 12l6 11H11z', '#fff', '#222', 1.3),
    'sync-delete': sync(l('M11 11l12 12M23 11L10 23', '#fff', 4) + l('M11 11l12 12M23 11L10 23', '#222', 2.200)),
    'sync-copy': sync(p('M10 8h6l2 2v9h-8zM15 13h6l2 2v8h-8z', '#fff', '#2b4a9c') + l('M12 12h4M17 17h4M17 20h4', '#2b4a9c', 1)),
    'sync-pattern': sync(r(15, 6, 7, 7, '#fff', '#222', 1.3) + r(15, 15, 7, 7, '#fff', '#222', 1.3)),
    'sync-dim': sync(r(8, 9, 15, 14, '#fff') + t(13, 16, 'x', 9) + l('M8 16v7M23 16v7M9 20h13', '#222', 1.3) + p('M9 20l4-2v4zM22 20l-4-2v4z', '#222')),
    'sync-off': cube(12, 12, 10, ['#a79ba8', '#94889a', '#857a8b'], '#7c7280'),
    'sync-group': sync(r(11, 11, 12, 12, '#fff', '#222') + r(13, 13, 6, 6, 'none', '#1c2a80', 1.3) + r(16, 16, 6, 6, 'none', '#1c2a80', 1.3)),
    'sync-shape': cube(13, 11, 10, GRAY, '#777') + p('M8 13l6 9H2z', '#a8a8a8', '#777', 1.3),
    'curve-edit': c(12, 9, 8.500, 'none', '#222', 1.600) + l('M2 9h21', '#d22') + wrench,
    'curve-trim': l('M1 11h17M5 2q8 0 13 9', '#222', 1.600) + l('M12 6l11 9', '#d22', 1.600) + '<path d="M2 22q12 0 17-9" fill="none" stroke="#777" stroke-dasharray="2 2"/>',
    'curve-corner': l('M1 12h13v12', '#222', 1.600) + l('M9 5l11 11', '#d22', 1.600) + '<path d="M14 0v12h9" fill="none" stroke="#777" stroke-dasharray="2 2"/>',
    'curve-s': l('M23 2q-10-1-10 8 1 12-12 11', '#222', 1.600) + l('M10 3l6 7M9 12l7 8', '#d22', 1.600),
    'curve-fillet': l('M1 2h8M22 15v9', '#222', 1.600) + l('M9 2q12 1 13 13', '#d22', 1.600) + '<path d="M9 2h13v13" fill="none" stroke="#777" stroke-dasharray="2 2"/>',
    'wire-box': p('M1 13L14 3l9 1-1 8-13 10-7-3z', '#fff4c0', '#3b2a9c', 1.3) + l('M1 13l7 2 1 7M8 15L23 4M5 10l7 2M10 6l7 2', '#3b2a9c', 1) + l('M3 18L14 9l8 1', '#e0642a', 1.300),
    'mesh-drop': p('M1 8l15-4 7 9-14 4z', '#dbe4ff', '#6474d8') + l('M5 7l8 9M9 6l9 9M5 11l14-4M7 14l14-4', '#6474d8', .9) + l('M5 14v8M12 17v6M20 14v6', '#e0862a', 1.4) + p('M3 20h4l-2 3zM10 21h4l-2 3zM18 19h4l-2 3z', '#e0862a'),
    quad: p('M2 7l18-4 2 15-17 4z', '#f3f6ff', '#6474d8', 1.300) + dots([[2, 7], [20, 3], [22, 18], [5, 22]]),
    'mesh-green': p('M1 13q5-10 12-10 6 0 10 7-8 1-12 12-4-7-10-9', '#a9dcc0', '#22774c') + l('M4 9q7 2 11 8M8 5q7 3 11 8M17 4Q8 6 5 15M20 7q-9 2-12 11', '#22774c', 1),
    'face-join': p('M8 3l14-2v13l-14 2z', '#8dbbf2', '#3a6fbe') + p('M1 16q6 0 9-4 6 3 12-3v10L2 22z', '#fcd27c', '#b5842a') + p('M1 16l7 0 4 6-10 0z', '#b7d3f6'),
    'face-bridge': p('M7 9h11v13H7z', '#a0dcec', '#2a7c90') + l('M1 2q10 8 22 1M0 9q4 1 7 0M18 9q3 0 6-1M6 9q-2 8 0 14M18 9q2 7 0 14', '#2a6c80', 1.400),
    'face-axis': p('M1 9L14 1q0 6 8 9l-11 8Q5 17 1 9', '#e0ebfb', '#3a55b8') + l('M5 7q1 6 9 9M9 4q1 6 9 9', '#8aa0d8', 1) + l('M11 17V6M11 17l10-4M11 17l10 5', '#c22', 1.300),
    'face-wave': p('M1 16q5-6 8-5l14-7v6l-12 11-8 2z', '#e2962a', '#5a3610') + p('M1 13q5-6 9-5l11-5 2 4-12 8-8 1z', '#fbc23c', '#8a5a12') + l('M8 8l4 6M13 6l4 5M5 11q9 0 15-6', '#8a5a12', 1),
    'face-twist': p('M1 5q7 4 11 6 6-1 11-5v13q-6-2-11-6-4 5-11 5z', '#7fa9d8', '#4a6c98') + p('M1 5q7 4 11 6-3 7-11 7z', '#f4dca0') + p('M12 11q6 6 11 8V6z', '#4678b8'),
    'face-curve': p('M2 5q4 5 9 3t12-3v12q-6 0-11 3-6 3-9-1z', '#c9dff9', '#3a6fbe') + p('M2 5q4 5 9 3l2 12-9 1z', '#fbe6a8') + l('M2 3l9 9', '#d22', 1.600) + dots([[2, 4], [10, 12]]),
    'face-points': p('M1 9L10 2l13 6v6l-10 7-5-3v-6z', '#a6dae0', '#2a7c90') + l('M5 6l11 6v8', '#2a7c90', 1) + r(6, 3, 4, 3, '#d44') + r(12, 5, 4, 3, '#d44') + r(17, 8, 4, 3, '#d44') + r(8, 12, 4, 6, '#d66'),
    'face-project': p('M4 4l18-2-3 6-16 1z', '#fbd890', '#c07a18') + p('M1 20q4-6 11-4l10 1q-3 5-9 5-6-3-12-2', '#86a8ec', '#2a3c90') + l('M10 7q5 3 1 9', '#e0862a', 2) + p('M8 13h6l-3 5z', '#e0862a'),
    'face-fold': p('M1 9q8-2 12-6l10 4q-5 5-12 5zM3 16q8-2 12-5l8 5q-5 4-11 6z', '#dbe4fa', '#3a55b8') + l('M1 12q8 2 12 1 4-5 9-4', '#d22', 1.600),
    'face-color': p('M1 11Q7 1 20 4l-3 7q-8-1-10 6z', '#7ec8a0', '#3a9c8c') + p('M1 12q3 5 6 5 2-6 8-6l-6 11-7-2z', '#b04ce0') + p('M9 16q1-5 8-5l-6 10z', '#f5d75a') + p('M19 8l4 6h-3v5h-2v-5h-2z', '#e87a28'),
    'face-red': p('M1 12L10 2l13 5-8 15q-5-7-14-10', '#fff', '#d22', 1.600) + l('M14 4l-8 10M18 5l-7 13M4 9q9 1 13 8M7 5q9 2 13 7', '#d22', 1.500) + p('M1 13q9 3 13 10l2-2Q11 14 1 11z', '#b7cef2'),
    'face-edge': p('M3 7q9-8 20 0-7 5-7 15-12-2-13-15', '#b9d3f6', '#4a6cb0') + l('M17 6q-6-4-11 0-5 7 5 14', '#111', 2) + dots([[6, 6], [17, 6], [11, 20]]),

    clock: c(12, 12, 10, '#e7ecf1', '#53606c', 2) + c(12, 12, 7, '#f8fbff', '#a2b0bd') + l('M12 6v6h5', '#222', 1.6) + l('M12 4v1M12 19v1M4 12h1M19 12h1', '#333', 1),
    views: p('M12 1l9 5v11l-9 5-9-5V6z', '#fff', '#1f8a50', 2) + l('M3 6l9 5 9-5M12 1v21M3 17l9-6 9 6', '#1f8a50', 1.500) + p('M13 22l9-7v7z', '#e0342a'),
    check: p('M2 12l5-3 3 5L19 3l4 0-12 19z', '#22b03c', '#138428'),
    camera: p('M1 6l16-5v16L4 21z', '#f6d6e4', '#a02a58') + c(11, 10, 6, '#d78ab8', '#6c3060', 1.5) + r(17, 10, 6, 9, '#6a3a78') + c(11, 10, 2.500, '#fff'),
    drawing: r(6, 2, 17, 14, '#dfe6f8', '#3a4f98') + r(4, 5, 17, 14, '#eef2fb', '#3a4f98') + r(1, 8, 17, 14, '#fff', '#3a4f98', 1.500) + r(9, 16, 9, 6, 'none', '#3a4f98'),
    folder: folder('#fdeea0'),
    'folder-eq': folder('#fdeea0') + l('M16 2h8M16 5h8', '#111', 1.500),
    csys: p('M6 6l12 3-3 12-9-6z', '#c9d6f4', '#7c8cd0') + l('M4 2l3 14 15 5M7 16l14-7', '#a55', 1.400) + dots([[3, 2], [21, 9], [22, 21]]),
    'trim-body': p('M2 8l5-4h14v12l-4 4H2z', '#f9bb50', '#a77c20') + p('M14 4h8v12l-5 4H9z', '#7db7ee') + p('M2 8l5-4h15l-5 4z', '#fce3a0'),
    'shell-red': p('M10 3l12-1v17l-9 4-3-3z', '#2e5bb8', '#1a2f68') + p('M10 3l4 3v16l-13-6 2-6 7-2z', '#f2a13c', '#8a3a10') + p('M3 12l7-3v9z', '#d42a2a'),
    pin: c(14, 9, 6, '#f0e860', '#222', 1.800) + p('M3 13l7-9 6 10-7 4z', '#d6c820', '#222', 1.600) + l('M7 16l-5 6', '#222', 2),

    'tab-assembly': r(3, 2, 5, 5, '#f6e63a', '#776c10') + r(1, 7, 5, 5, '#f6e63a', '#776c10') + r(6, 7, 5, 5, '#f6e63a', '#776c10') + l('M12 11h11M4 15v8M4 19h5M17 19h6', '#444', 1.300) + r(10, 15, 6, 7, '#f6e63a', '#776c10', 1.300),
    'tab-part': p('M1 4q4-3 8 0v6q-4 3-8 0z', '#f2b8b8', '#a83a3a', 1.300) + l('M10 11h13M4 15v8M4 19h5M18 22h5', '#555', 1.300) + c(13, 19, 4, '#fff', '#a83a3a', 1.300) + c(13, 19, 1.300, '#a83a3a'),
    'tab-reuse': p('M3 2h6v14l3 2v5H0v-5l3-2z', '#5d92e8', '#264f98') + p('M13 5l7-4 3 2v18l-7 2-3-3v-4h4V9h-4z', '#fbd34a', '#8a6b10') + dots([[19, 5], [19, 18]], '#333', 1.200),
    'tab-web': p('M3 1h13l5 5v17H3z', '#fbf3b8', '#a08c30') + c(12, 14, 6, '#3b80d8', '#1d4c98') + p('M9 10q4-2 6 1l-3 5-3-1z', '#46b85a'),
    'tab-list': p('M1 5l6-3v18l-6 3z', '#dce8fa', '#61758c') + r(7, 2, 16, 18, '#fff', '#61758c') + c(12, 6, 2, '#3a55b8') + c(12, 11, 2, '#2a9a3c') + c(12, 16, 2, '#c22a5a') + l('M15 6h6M15 11h6M15 16h6', '#333', 1.300),
    'tab-colors': r(2, 1, 8, 4, '#f03a1a') + r(2, 5, 8, 4, '#ffb01a') + r(2, 9, 8, 4, '#f8f020') + r(2, 13, 8, 4, '#40e040') + r(2, 17, 8, 6, '#20c8f8') + l('M14 8l8 14', '#3a3a9c', 3) + l('M15 1v7M11 4h8', '#f6e63a', 1.500),
    'tab-wizard': l('M16 1v9M12 5h10', '#f6e63a', 3) + p('M3 3h6v15l-3 3-3-3z', '#3a4a98') + l('M1 18h9M9 13l11-6', '#3a4a98', 2.500) + l('M13 10l9 12', '#5a60b8', 3),
    'tab-roles': c(16, 6, 4.500, '#e8a860', '#945a20') + p('M9 18q1-8 7-8t7 8z', '#2a8a3c') + c(7, 12, 4.500, '#d08a70', '#5a2a60') + p('M1 23q0-7 6-7t6 7z', '#9060d0'),
    'tab-scene': r(1, 3, 22, 18, '#4ea0e8', '#222', 1.500) + c(18, 7, 3, '#fbe83a') + p('M2 20q2-8 7-8t7 4q4 0 6 4z', '#fff', '#88a'),
    'tab-windows': r(1, 2, 22, 20, '#fff', '#444') + r(3, 5, 6, 5, '#4a60c8') + r(16, 5, 6, 5, '#4a60c8') + l('M10 7h4M10 19h4', '#333', 1.500) + r(3, 15, 5, 5, '#fff', '#3a4fb0') + r(15, 15, 7, 5, '#777', '#333'),

    'dim-quick': l('M4 2v20M1 3h7M1 21h7', '#c22', 1.300) + t(0, 14, 'x', 8, '#c22') + p('M12 8l11-2v13l-8 4-3-3z', '#3f78d8', '#1d3c88') + p('M15 1h7l-5 5h4L9 13l4-6h-3z', '#fbe83a', '#8a7a10'),
    'dim-ord': p('M0 12h6v10H0zM6 22l4-2V8L6 12', '#c2cfd6', '#6c7f8c') + l('M3 9V4l12-3v17M7 8V3M11 12V2', '#c22', 1.300),
    'csys-link': cube(17, 8, 6, STEEL, '#456') + l('M5 8h6M12 13v6M11 8l1 5', '#c22', 1.300) + c(3, 8, 2, '#fff', '#c22', 1.300) + c(11, 21, 2, '#fff', '#c22', 1.300),
    'edit-face': p('M5 12L8 2l9 1 4 9-6 6z', '#b5d0e2', '#42607a') + l('M2 14q2 6 8 7M1 22h20', '#c22', 1.400) + p('M10 20l2-5 8-5 3 4-8 6z', '#f8c83a', '#7a5610'),
    finish: p('M1 15l12-5 10 4-11 6z', '#eaf2f8', '#456') + p('M1 15l11 5v4L1 19zM23 14l-11 6v4l11-6z', '#a9c2d4', '#456') + l('M4 5l3 6 5-10h7', '#c22', 1.500),
    checklist: p('M1 5h14v17H1z', '#fff', '#4a60b0') + l('M3 10l2 2 3-4M3 16l2 2 3-4', '#2a9a3c', 1.500) + l('M9 11h4M9 17h4', '#4a60b0', 1) + p('M11 5l7-4 4 2v4l-8 2z', '#f0b880', '#8a5a2a') + r(18, 1, 5, 6, '#3a55b8'),
    'label-a': p('M1 17l12-4 10 3-11 5z', '#eaf2f8', '#456') + p('M1 17l11 4v3L1 20zM23 16l-11 5v3l11-5z', '#a9c2d4', '#456') + l('M12 9v8', '#c22', 1.300) + r(8, 1, 8, 8, '#fff', '#c22') + t(9.500, 8, 'A', 7, '#c22'),
    'pmi-tools': p('M6 2l6-1 6 8-6 2z', '#fff', '#3a4fb0') + p('M1 11l6-6 3 4-5 5z', '#2c4aa0') + r(14, 3, 8, 7, '#dce6fa', '#3a4fb0') + wrench + c(3, 11, 2, '#222'),

    'as-find': cube(15, 17, 7, GOLD) + '<g transform="scale(.65)">' + bino() + '</g>',
    'as-open': cube(16, 17, 7, GOLD) + '<g transform="scale(.6)">' + folder() + '</g>',
    'as-box': '<rect x="1" y="1" width="22" height="22" fill="none" stroke="#222" stroke-width="1.200" stroke-dasharray="2 2"/>' + cube(9, 8, 5, GOLD) + cube(8, 15, 5, GOLD) + cube(16, 16, 5, GOLD),
    'as-wire': cube(9, 8, 6, WHITE, '#3a4f88') + cube(16, 15, 6, WHITE, '#3a4f88') + cube(8, 16, 6, WHITE, '#3a4f88'),
    'as-camera': p('M2 4l5-2h7l3 3v9l-4 3-11-2z', '#4a8a98', '#1c4450') + c(8, 9, 4, '#bfe4ee', '#123') + disk(13, 13, 10),
    'as-off': cube(8, 8, 6, GRAY) + cube(16, 10, 6, GRAY) + cube(15, 17, 6, GRAY),
    'as-add': cube(7, 7, 5, GOLD) + cube(7, 17, 6, GOLD) + cube(15, 18, 5, GOLD) + plus(19, 5),
    'as-new': cube(8, 9, 5, GOLD) + cube(8, 17, 6, GOLD) + cube(16, 18, 5, GOLD) + plus(20, 5) + l('M9 2v9M5 6h8M6 3l6 6M12 3L6 9', '#e8d62a', 1.500),
    'as-parent': l('M14 10v12M14 15h4M14 21h4', '#555', 1.200) + r(11, 6, 6, 5, '#fff', '#c22') + r(18, 13, 4, 4, '#f9cf3a', '#777') + r(18, 19, 4, 4, '#f9cf3a', '#777') + l('M5 1v9M1 5h8M2 2l6 6M8 2L2 8', '#d5c81e', 1.500),
    'as-array': cube(5, 17, 5, GOLD) + cube(12, 17, 5, GOLD) + cube(19, 17, 5, GOLD) + plus(18, 5),
    'as-move': cube(12, 11, 7, GOLD) + l('M17 2h5v5M14 0M2 16v6h5M5 15v4h4', '#3a60b8', 1.300),
    mirror: p('M5 1v9l6-5zM19 1v9l-6-5z', '#2230b0') + l('M12 1v22', '#555', 1) + r(2, 14, 8, 8, '#fbe83a', '#222') + p('M14 13q9 2 9 10h-9z', '#d22', '#611'),
    constrain: p('M1 4l7 5-7 4z', '#1f9a3c') + p('M3 13l6 3-6 6z', '#d02020') + l('M18 2v8M13 10h11M12 22l6-8M17 22l6-8', '#a02a58', 1.500),
    'mirror-save': p('M2 9v7l4-3zM11 9v7l-4-3z', '#2230b0') + r(1, 17, 5, 5, '#fbe83a', '#222') + p('M8 16q5 1 5 7H8z', '#d22') + disk(14, 1, 8),
    'as-wave': p('M4 6l9-5v14l-9 7z', '#fbe0a0', '#c89a40') + cube(15, 10, 6, GOLD) + cube(17, 16, 4, GOLD),
    'as-replace': cube(8, 7, 6, GOLD) + cube(17, 16, 6, ['#dbe9fa', '#a9c4ea', '#86a6d4']) + l('M5 14q1 5 5 4', '#d0441c', 2),
    'as-wrench': cube(16, 8, 6, ['#dbe9fa', '#a9c4ea', '#86a6d4']) + wrench,
    'as-wrench2': r(11, 1, 6, 6, '#fff', '#555') + r(16, 8, 6, 6, '#fbe060', '#555') + r(10, 9, 6, 6, '#fbe060', '#555') + wrench,
    'as-explode': cube(7, 6, 5, GOLD) + cube(6, 18, 5, GOLD) + cube(18, 18, 5, GOLD),
    'as-steps': r(14, 2, 6, 6, '#fff', '#555') + r(10, 9, 6, 6, '#fff', '#555') + r(6, 16, 6, 6, '#fbb02c', '#a33'),
    'as-ghost': cube(8, 9, 6, WHITE, '#999') + cube(8, 16, 6, WHITE, '#999') + cube(16, 16, 6, WHITE, '#999') + cube(16, 8, 6, GOLD),
    'as-window': cube(6, 16, 6, WHITE, '#678') + r(5, 2, 18, 18, '#fff', '#2a4fc0', 1.600) + r(5, 2, 18, 4, '#2a4fc0') + cube(14, 12, 6, GOLD),
    link: '<g fill="none" stroke="#7d6c12" stroke-width="4" transform="rotate(-20 12 12)"><rect x="8" y="2" width="7" height="11" rx="3.500"/><rect x="9" y="11" width="7" height="11" rx="3.500"/></g><g fill="none" stroke="#e4cf4a" stroke-width="2" transform="rotate(-20 12 12)"><rect x="8" y="2" width="7" height="11" rx="3.500"/><rect x="9" y="11" width="7" height="11" rx="3.500"/></g>',
    'link-cube': p('M12 1l11 5v12l-11 5-11-5V6z', '#fbd43c', '#a27c10') + p('M12 1l11 5-11 5L1 6z', '#fff0a0') + diamond(12, 12, 6),
    'link-info': '<g fill="none" stroke="#8c7a20" stroke-width="2" transform="rotate(-15 7 9)"><rect x="3" y="1" width="6" height="9" rx="3"/><rect x="5" y="8" width="6" height="9" rx="3"/></g>' + info(12, 11),
    'tree-info': l('M0 12h8M8 12l6-8M8 12h6M8 12l6 7', '#333', 1.200) + r(14, 1, 8, 4, '#fff', '#2b3a90') + r(14, 8, 8, 4, '#fff', '#2b3a90') + info(13, 12),

    'an-check': glove('#86c4e8') + l('M6 16V8M10 14V5M14 15V5M19 14V4', '#2a3c90', 1.200) + l('M1 4l3 3 5-6', '#22a03c', 2) + dots([[10, 5], [14, 5], [19, 4]], '#c22', 1.300),
    'an-arc': glove('#5f8ee0') + l('M5 14Q7 2 13 2t8 12M8 12Q9 5 13 5t5 9M11 10v-6', '#d04050', 1.300),
    'an-lines': p('M1 10q8-1 12 5l10-1-7 8Q8 14 1 15z', '#6c94e4', '#4a60b0') + l('M4 1l18 8M4 5l18 8', '#222', 1.300) + l('M2 13q9-1 14 6', '#d04070', 1.300),
    'an-gap': p('M2 15V3l20 4-1 10z', '#fff', '#c44') + l('M4 7h15M5 8v5M9 8v5M13 9v5M17 9v5M4 13h15', '#c22', 1.400) + r(0, 18, 22, 5, '#f9da70', '#a4811e'),
    'an-dist': l('M1 3h22M7 1v9M12 1v20M18 8v12M15 8h8', '#a22', 1.300) + r(1, 8, 5, 4, '#fff', '#333') + r(12, 19, 11, 4, '#fff', '#333') + p('M16 11l2-4 2 4zM16 17l2 4 2-4z', '#c22'),
    'an-comb': p('M2 15l18-9 2 5-17 9z', '#bdd2f6') + l('M2 14v8M5 13l-1 10M8 12l-1 9M11 11v8M14 9l-1 8', '#2230a0', 1.600) + l('M14 8l1-7M15 8l3-7M16 8l6-6M17 9l6-4M17 10h6', '#d22', 1.400),
    'an-comb2': p('M1 11q10-5 22-2l-2 7q-9-3-18 2z', '#bcd0f6', '#5d78c8') + l('M3 14Q15 12 16 1q5 2 4 7M6 18l3 5 4-7M15 5l5-2', '#d04050', 1.200),
    'an-color': p('M2 12Q4 2 13 2q6 2 9 7l-4 4 3 6-9 4Q2 20 2 12', '#f5d02a', '#887010') + p('M2 12Q4 4 9 3l1 18Q3 19 2 12', '#e8502a') + p('M12 2q6 1 10 7l-8 3z', '#30b040') + l('M14 11v9M11 18h11M14 20l6-5', '#111', 1.300),
    'an-curve': l('M1 13Q13 3 18 23', '#222', 1.800) + l('M1 9L9 4l12 7v11', '#c44', 1.100) + c(9, 4, 2, '#fff', '#2230a0', 1.300) + c(21, 10, 2, '#fff', '#2230a0', 1.300),
    'an-nodes': l('M3 2q7 2 8 10t9 10h3', '#111', 1.600) + r(1, 1, 4, 4, '#2230a0') + r(7, 6, 4, 4, 'none', '#2230a0') + r(16, 19, 4, 4, 'none', '#2230a0') + c(12, 14, 1.500, '#2230a0'),
    'an-hair': l('M1 12q15-5 20 11', '#222', 1.600) + l('M3 12L2 5M7 11L6 3M11 11l1-8M14 13l5-9M17 15l6-6M19 18l5-3M20 21l4 0', '#b33', 1.200),
    'an-flow': p('M2 12q10 7 20-1l-2 11q-9 2-16-2z', '#4a74d8', '#24429c') + p('M2 12q10 7 20-1l-1 4q-9 6-18 1z', '#c9dbfa') + p('M10 3l2-3 2 5q3 5-1 9-4-3-2-8z', '#f08a2a'),
    'an-zebra': p('M2 17L12 6l11 0-9 12z', '#b9c9b6') + l('M4 17L13 6M9 18l9-12M14 18l8-11', '#6d9a68', 2.500),

    windows: p('M3 5q4-3 8-1l-2 8q-4-2-8 1z', '#f0502a') + p('M13 4q4 2 9 0l-2 8q-4 2-8 0z', '#6fc03a') + p('M1 14q4-3 8-1l-2 8q-4-2-7 0z', '#4a90e8') + p('M11 14q4 2 8 0l-2 8q-4 2-8 0z', '#fbcb2a'),
    globe: c(12, 12, 11, '#4a90c8', '#c8dcea', 1.500) + p('M4 6q5-5 10-2l-3 6 3 4-4 6q-3-6-6-6zM16 8l5 1-1 7-4-2z', '#f4f8fb'),
    desktop: p('M5 2h13l-1 13H4z', '#64b4f4', '#1d4c98') + p('M8 16h7l4 6H8z', '#dbe9fa') + r(7, 4, 8, 8, '#bfe2fb'),
    mail: r(1, 4, 19, 17, '#bfe2fb', '#1d5ca8') + c(11, 12, 6, 'none', '#1d5ca8', 2) + c(11, 12, 2, '#1d5ca8') + l('M13 11l9-9', '#d8ecfb', 3),
    brushes: p('M6 11h12l-2 12H8z', '#e2a07a', '#7a3a20') + l('M8 11L4 2M12 11V1M15 11l6-8', '#3a60b8', 2.200) + l('M10 11L8 3M14 11l3-9', '#e8c82a', 2) + l('M9 12l1 10M14 12l-1 10', '#3a8a4c', 1.500),
    sogou: r(1, 1, 22, 22, '#f06a2a', '#fff', 1.500) + l('M18 6H9q-4 3 0 5l6 1q4 3 0 6H6', '#fff', 3),
    'tray-back': c(12, 12, 11, '#1f7ce0', '#9ad0fb', 1.500) + l('M15 6l-6 6 6 6', '#fff', 3),
    'tray-green': c(14, 10, 8, '#28a83c', '#0e6a20') + p('M0 9l8-3v8z', '#0e6a20') + c(12, 7, 3, '#8ae08c') + r(10, 18, 6, 5, '#7a8a7c'),
    'tray-teal': p('M3 1h20v14q-2 7-8 8H1V9q0-6 2-8', '#27a3a0', '#bfeef0', 1.500) + c(12, 12, 6, '#fff') + c(12, 12, 3, '#27a3a0'),
};

const svg = name => `<svg viewBox="0 0 24 24" aria-hidden="true">${icons[name] || ''}</svg>`;

function tool(name) {
    const pressed = name.startsWith('*');
    const id = name.replace('*', '');
    return `<button type="button" class="tool${pressed ? ' pressed' : ''}" aria-label="${id.replace(/-/g, ' ')}">${svg(id)}</button>`;
}

const drop = (cls = '') => `<span class="drop ${cls}"><i class="caret"></i></span>`;

function colEnd(token) {
    const size = { endm: ' m', endl: ' l', 'end!': ' last' }[token] || '';
    const chevrons = token === 'endx' ? '' : l('M30 1l3 3 3-3M30 6l3 3 3-3', '#000', 1.800);
    return `<div class="colend${size}"><svg viewBox="0 0 37 12">${p('M6 1v6l-4-3z', '#000')}${chevrons}</svg></div>`;
}

function build(token) {
    switch (token) {
        case '|':
        case '-': return '<span class="sep"></span>';
        case '#': return '<span class="grip"></span>';
        case '>': return drop();
        case '>.': return drop('low');
        case '>>': return drop('big');
        case 'more': return `<button type="button" class="more" aria-label="more"><svg viewBox="0 0 19 31">${l('M6 4l3 3-3 3M10 4l3 3-3 3', '#000', 1.600)}${p('M7 22h6l-3 4z', '#000')}</svg></button>`;
    }
    if (token.startsWith('end')) return colEnd(token);
    if (token.endsWith('+')) return `<div class="pair">${tool(token.slice(0, -1))}${drop()}</div>`;
    return tool(token);
}

document.querySelectorAll('[data-tools]').forEach(el => {
    el.innerHTML = el.dataset.tools.split(' ').map(build).join('');
});

document.querySelectorAll('[data-icon]').forEach(el => {
    el.innerHTML = svg(el.dataset.icon);
});
```
